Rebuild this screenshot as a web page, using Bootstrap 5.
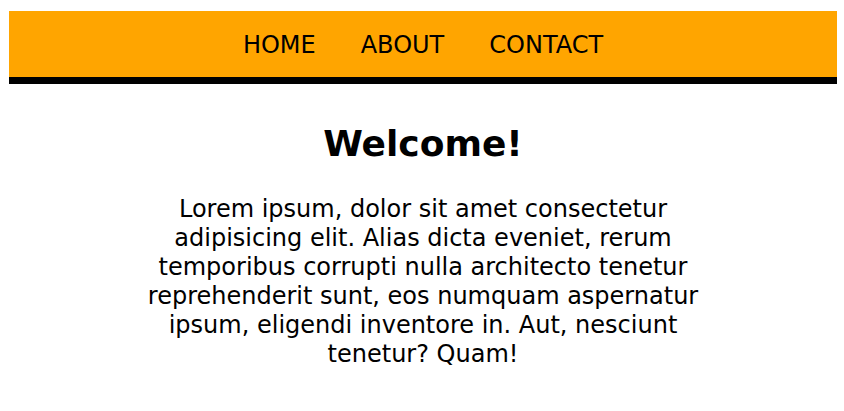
<!DOCTYPE html>
<html lang="en">
<head>
<meta charset="utf-8">
<meta name="viewport" content="width=device-width, initial-scale=1">
<title>Welcome</title>
<link href="https://cdn.jsdelivr.net/npm/bootstrap@5.3.0/dist/css/bootstrap.min.css" rel="stylesheet">
<style>
body { font-family: Verdana, "DejaVu Sans", sans-serif; font-size: 24px; line-height: 29px; color: #000; padding: 11px 7px 0 9px; }
.site-nav { background: orange; border-bottom: 7px solid #000; padding: 20px 0 17px; }
.site-nav .nav { column-gap: 45px; }
.site-nav .nav-link { color: #000; padding: 0; font-size: 24px; }
.welcome-title { font-size: 36px; line-height: 44px; font-weight: 700; margin: 38px 0 29px; }
.intro { max-width: 576px; }
</style>
</head>
<body>
<header class="site-nav">
  <nav aria-label="Main">
    <ul class="nav justify-content-center">
      <li class="nav-item"><a class="nav-link" href="#home">HOME</a></li>
      <li class="nav-item"><a class="nav-link" href="#about">ABOUT</a></li>
      <li class="nav-item"><a class="nav-link" href="#contact">CONTACT</a></li>
    </ul>
  </nav>
</header>
<main class="text-center">
  <h1 class="welcome-title">Welcome!</h1>
  <p class="intro mx-auto mb-0">Lorem ipsum, dolor sit amet consectetur adipisicing elit. Alias dicta eveniet, rerum temporibus corrupti nulla architecto tenetur reprehenderit sunt, eos numquam aspernatur ipsum, eligendi inventore in. Aut, nesciunt tenetur? Quam!</p>
</main>
<script src="https://cdn.jsdelivr.net/npm/bootstrap@5.3.0/dist/js/bootstrap.bundle.min.js"></script>
</body>
</html>
